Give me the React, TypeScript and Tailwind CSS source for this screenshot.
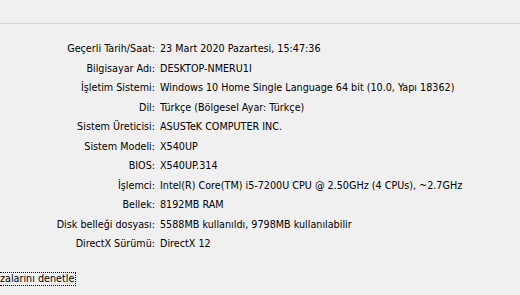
import React from "react";

const rows: [string, string][] = [
  ["Geçerli Tarih/Saat:", "23 Mart 2020 Pazartesi, 15:47:36"],
  ["Bilgisayar Adı:", "DESKTOP-NMERU1I"],
  ["İşletim Sistemi:", "Windows 10 Home Single Language 64 bit (10.0, Yapı 18362)"],
  ["Dil:", "Türkçe (Bölgesel Ayar: Türkçe)"],
  ["Sistem Üreticisi:", "ASUSTeK COMPUTER INC."],
  ["Sistem Modeli:", "X540UP"],
  ["BIOS:", "X540UP.314"],
  ["İşlemci:", "Intel(R) Core(TM) i5-7200U CPU @ 2.50GHz (4 CPUs), ~2.7GHz"],
  ["Bellek:", "8192MB RAM"],
  ["Disk belleği dosyası:", "5588MB kullanıldı, 9798MB kullanılabilir"],
  ["DirectX Sürümü:", "DirectX 12"],
];

const App = () => {
  return (
    <div
      className="w-[520px] h-[295px] overflow-hidden bg-[#f0f0f0] text-black text-[10.7px]"
      style={{ fontFamily: '"DejaVu Sans Condensed", "Liberation Sans", sans-serif' }}
    >
      <div className="h-[23px]" />
      <div className="h-px bg-[#d9d9d9]" />
      <div className="pt-[15px] grid grid-cols-[155px_1fr] gap-x-[5px]">
        {rows.map(([label, value]) => (
          <React.Fragment key={label}>
            <div className="text-right leading-[19.5px] whitespace-nowrap">{label}</div>
            <div className="leading-[19.5px] whitespace-nowrap">{value}</div>
          </React.Fragment>
        ))}
      </div>
      <div className="pt-[17px]">
        <span className="inline-block leading-[12px] pr-px border-t border-r border-b border-dotted border-black">
          zalarını denetle
        </span>
      </div>
    </div>
  );
};

export default App;
